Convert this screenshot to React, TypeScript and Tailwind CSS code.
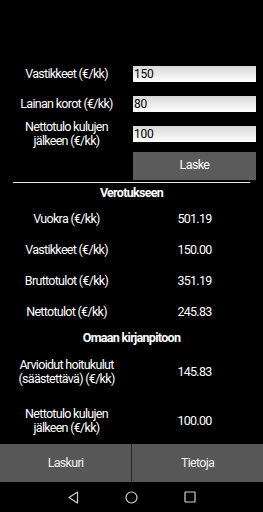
import React from 'react';

const inputs = [
  { label: 'Vastikkeet (€/kk)', value: '150' },
  { label: 'Lainan korot (€/kk)', value: '80' },
  { label: 'Nettotulo kulujen jälkeen (€/kk)', value: '100' },
];

const taxRows = [
  { label: 'Vuokra (€/kk)', value: '501.19' },
  { label: 'Vastikkeet (€/kk)', value: '150.00' },
  { label: 'Bruttotulot (€/kk)', value: '351.19' },
  { label: 'Nettotulot (€/kk)', value: '245.83' },
];

export default function App() {
  return (
    <div
      className="w-[263px] h-[512px] bg-black text-white flex flex-col overflow-hidden tracking-[-0.7px]"
      style={{ fontFamily: 'Roboto, "Noto Sans", sans-serif' }}
    >
      <div className="h-[59px]" />

      {/* input form */}
      {inputs.map((row) => (
        <div key={row.label} className="h-[30px] flex items-center">
          <div className="w-[133px] px-2 text-center text-[12.5px] leading-[14px]">
            {row.label === 'Nettotulo kulujen jälkeen (€/kk)' ? (
              <>
                Nettotulo kulujen
                <br />
                jälkeen (€/kk)
              </>
            ) : (
              row.label
            )}
          </div>
          <div className="w-[123px] h-[16px] bg-gradient-to-b from-[#d8d8d8] to-white text-black text-[12px] leading-[16px] pl-[1px] tracking-[-0.3px]">
            {row.value}
          </div>
        </div>
      ))}

      <div className="flex mt-[3px]">
        <div className="w-[133px]" />
        <button className="w-[123px] h-[28px] bg-[#5b5b5b] text-white text-[12.5px] tracking-[-0.6px]">Laske</button>
      </div>

      <div className="mx-[13px] mt-[2px] w-[237px] h-[1px] bg-[#e8e8e8]" />

      <div className="h-[20px] mt-[1px] flex items-center justify-center text-[12.5px] font-bold">
        Verotukseen
      </div>

      {taxRows.map((row) => (
        <ResultRow key={row.label} value={row.value} className="h-[31px]">
          {row.label}
        </ResultRow>
      ))}

      <div className="h-[20px] mt-[1px] flex items-center justify-center text-[12.5px] font-bold">
        Omaan kirjanpitoon
      </div>

      <ResultRow value="145.83" className="h-[44px] mt-[2px]">
        Arvioidut hoitukulut
        <br />
        (säästettävä) (€/kk)
      </ResultRow>

      <ResultRow value="100.00" className="h-[46px] mt-[4px]">
        Nettotulo kulujen
        <br />
        jälkeen (€/kk)
      </ResultRow>

      {/* tabs */}
      <div className="h-[38px] flex bg-[#575757] mt-auto">
        <div className="w-[131px] flex items-center justify-center text-[12.5px] text-[#f0f0f0]">Laskuri</div>
        <div className="w-[1px] bg-[#2a2a2a]" />
        <div className="flex-1 flex items-center justify-center text-[12.5px] text-[#f0f0f0]">Tietoja</div>
      </div>

      {/* android nav bar */}
      <div className="h-[30px] bg-black flex items-center justify-center">
        <div className="flex items-center gap-[46px]">
          <svg width="12" height="13" viewBox="0 0 12 13" fill="none" stroke="#cfcfcf" strokeWidth="1.2">
            <path d="M10.5 1 L2 6.5 L10.5 12 Z" strokeLinejoin="round" />
          </svg>
          <svg width="13" height="13" viewBox="0 0 13 13" fill="none" stroke="#cfcfcf" strokeWidth="1.2">
            <circle cx="6.5" cy="6.5" r="5.5" />
          </svg>
          <svg width="12" height="12" viewBox="0 0 12 12" fill="none" stroke="#cfcfcf" strokeWidth="1.2">
            <rect x="1" y="1" width="10" height="10" rx="0.5" />
          </svg>
        </div>
      </div>
    </div>
  );
}

function ResultRow({
  value,
  className,
  children,
}: {
  value: string;
  className: string;
  children: React.ReactNode;
}) {
  return (
    <div className={`flex items-center ${className}`}>
      <div className="w-[133px] px-1 text-center text-[12.5px] leading-[14px]">{children}</div>
      <div className="w-[123px] text-center text-[12.5px]">{value}</div>
    </div>
  );
}
